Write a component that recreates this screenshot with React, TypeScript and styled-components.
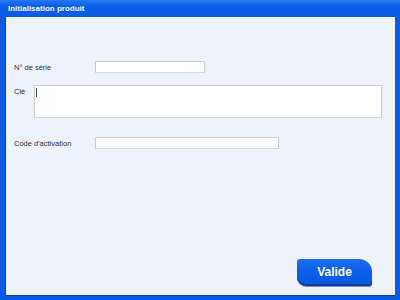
import React from "react";
import styled, { createGlobalStyle } from "styled-components";

const GlobalStyle = createGlobalStyle`
  html, body {
    margin: 0;
    padding: 0;
    width: 400px;
    height: 300px;
    overflow: hidden;
    font-family: "Liberation Sans", Arial, sans-serif;
  }
`;

const Window = styled.div`
  width: 400px;
  height: 300px;
  display: flex;
  flex-direction: column;
  background: #0b5ce4;
  box-sizing: border-box;
`;

const TitleBar = styled.div`
  height: 17px;
  flex-shrink: 0;
  display: flex;
  align-items: center;
  padding-left: 8px;
  background: linear-gradient(#2a7af2 0%, #0c5fe9 35%, #0a5ae4 100%);
  color: #f4f8ff;
  font-size: 8px;
  font-weight: bold;
`;

const Body = styled.div`
  flex: 1;
  margin: 0 5px 4px 5px;
  border-left: 1px solid #0a3fb0;
  border-bottom: 1px solid #0a3fb0;
  background: #eef2fb;
  display: flex;
  flex-direction: column;
  padding: 44px 13px 9px 8px;
  box-sizing: border-box;
`;

const Row = styled.div<{ $top?: number; $align?: string }>`
  display: flex;
  align-items: ${(p) => p.$align || "center"};
  margin-top: ${(p) => p.$top || 0}px;
`;

const Label = styled.span<{ $width: number; $pad?: number }>`
  width: ${(p) => p.$width}px;
  flex-shrink: 0;
  font-size: 7.5px;
  color: #333333;
  padding-top: ${(p) => p.$pad || 0}px;
`;

const Field = styled.div<{ $width?: number; $height: number }>`
  width: ${(p) => (p.$width ? `${p.$width}px` : "auto")};
  flex: ${(p) => (p.$width ? "0 0 auto" : "1")};
  height: ${(p) => p.$height}px;
  box-sizing: border-box;
  background: #ffffff;
  border: 1px solid #c9cdd5;
  border-bottom-color: #d6d9de;
  position: relative;
`;

const Caret = styled.span`
  position: absolute;
  left: 1px;
  top: 2px;
  width: 1px;
  height: 9px;
  background: #444;
`;

const Footer = styled.div`
  margin-top: auto;
  display: flex;
  justify-content: flex-end;
  padding-right: 10px;
`;

const Button = styled.button`
  width: 75px;
  height: 27px;
  border: none;
  border-radius: 3px 13px 3px 9px;
  background: linear-gradient(#1a6ff0 0%, #0b5fe8 50%, #0857dc 100%);
  box-shadow: inset 0 -2px 0 #0a3c9c, 0 1px 0 #7f93bf;
  color: #ffffff;
  font-family: "Liberation Sans", Arial, sans-serif;
  font-size: 12px;
  font-weight: bold;
  padding: 0 0 2px 0;
  cursor: pointer;
`;

export default function App() {
  return (
    <>
      <GlobalStyle />
      <Window>
        <TitleBar>Initialisation produit</TitleBar>
        <Body>
          <Row>
            <Label $width={81}>N° de série</Label>
            <Field $width={110} $height={12} />
          </Row>
          <Row $top={12} $align="flex-start">
            <Label $width={20} $pad={2}>Clé</Label>
            <Field $height={33}>
              <Caret />
            </Field>
          </Row>
          <Row $top={19}>
            <Label $width={81}>Code d'activation</Label>
            <Field $width={184} $height={12} />
          </Row>
          <Footer>
            <Button>Valide</Button>
          </Footer>
        </Body>
      </Window>
    </>
  );
}
